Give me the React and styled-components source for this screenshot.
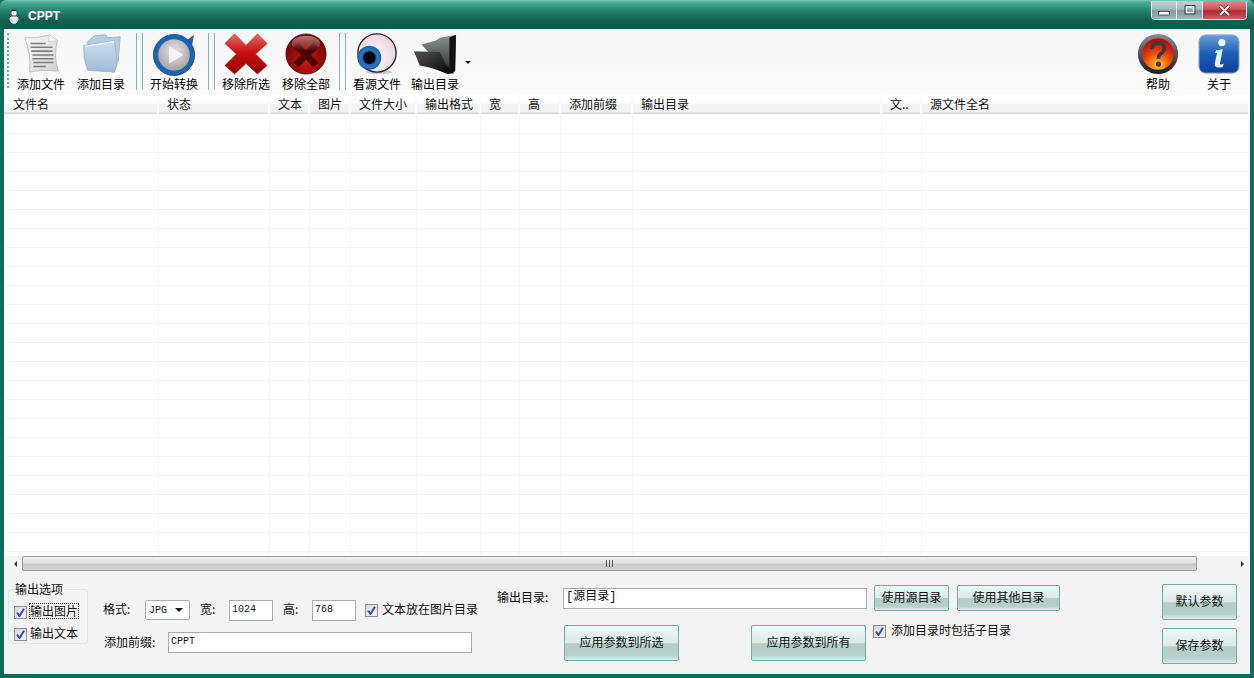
import React from 'react';
import styled, { createGlobalStyle } from 'styled-components';

const GlobalStyle = createGlobalStyle`
  html, body { margin: 0; padding: 0; background: #0f6b5b; }
  body { font-family: "Noto Sans CJK SC", "Liberation Sans", sans-serif; font-size: 12px; color: #111; }
  * { box-sizing: border-box; }
`;

const Window = styled.div`
  width: 1254px;
  height: 678px;
  display: flex;
  flex-direction: column;
  overflow: hidden;
  border-radius: 6px 6px 0 0;
  background: #0f6b5b;
`;

const TitleBar = styled.div`
  height: 29px;
  flex: none;
  display: flex;
  align-items: flex-start;
  padding-left: 8px;
  background: linear-gradient(#7fcab8 0, #4fb09a 2px, #2a8a76 9px, #14604f 20px, #0f5a4c 29px);
`;

const TitleIcon = styled.svg`
  width: 12px;
  height: 15px;
  margin-top: 9px;
`;

const TitleText = styled.span`
  margin: 9px 0 0 8px;
  font-family: "Liberation Sans", sans-serif;
  font-size: 12px;
  line-height: 15px;
  font-weight: bold;
  color: #fff;
`;

const Controls = styled.div`
  margin-left: auto;
  margin-right: 7px;
  display: flex;
  height: 19px;
  margin-top: 1px;
  border: 1px solid #dfe8e6;
  border-top: none;
  border-radius: 0 0 4px 4px;
  overflow: hidden;
`;

const ControlButton = styled.div`
  width: ${p => p.$width}px;
  display: flex;
  align-items: center;
  justify-content: center;
  border-right: ${p => (p.$close ? 'none' : '1px solid #e4ecea')};
  background: ${p =>
    p.$close
      ? 'linear-gradient(#e08a90 0, #c8555c 45%, #b02a30 55%, #cf5a60 100%)'
      : 'linear-gradient(#c4d2d6 0, #a6b8be 45%, #7e959d 55%, #a3b6bc 100%)'};
`;

const Body = styled.div`
  flex: 1;
  min-height: 0;
  display: flex;
  flex-direction: column;
  margin: 0 4px 4px 4px;
  background: #f3f3f3;
`;

const Toolbar = styled.div`
  height: 66px;
  flex: none;
  display: flex;
  padding-left: 3px;
  background: linear-gradient(#f6f6f6, #fcfcfc);
`;

const Grip = styled.div`
  width: 2px;
  height: 55px;
  margin: 4px 2px 0 0;
  border-left: 2px dotted #7fa8a8;
`;

const ToolButton = styled.div`
  width: ${p => p.$width || 60}px;
  display: flex;
  flex-direction: column;
  align-items: center;
  padding-top: 3px;
`;

const ToolIcon = styled.svg`
  width: 44px;
  height: 44px;
  display: block;
`;

const ToolLabel = styled.span`
  font-size: 12px;
  line-height: 15px;
  color: #000;
  white-space: nowrap;
`;

const Separator = styled.div`
  width: 7px;
  height: 57px;
  margin: 4px 1px 0 ${p => p.$left || 4}px;
  border-left: 1px solid #86b3b3;
  border-right: 1px solid #86b3b3;
`;

const DropArrow = styled.div`
  width: 0;
  height: 0;
  margin: 32px 0 0 2px;
  border-left: 3px solid transparent;
  border-right: 3px solid transparent;
  border-top: 3px solid #000;
`;

const RightTools = styled.div`
  margin-left: auto;
  display: flex;
`;

const GridHeader = styled.div`
  height: 19px;
  flex: none;
  display: flex;
  padding-left: 1px;
  background: linear-gradient(#ffffff 0, #ffffff 8px, #f2f3f5 9px, #f2f3f5 17px, #d5d5d5 18px);
`;

const HeaderCell = styled.div`
  width: ${p => p.$width}px;
  flex: ${p => (p.$grow ? 1 : 'none')};
  padding-left: 8px;
  font-size: 12px;
  line-height: 18px;
  color: #111;
  border-right: 2px solid #fbfbfb;
  overflow: hidden;
  white-space: nowrap;
`;

const GridBody = styled.div`
  flex: 1;
  min-height: 0;
  padding-top: 1px;
  overflow: hidden;
  background: #fff;
`;

const GridRow = styled.div`
  height: 19px;
  display: flex;
  padding-left: 1px;
  border-bottom: 1px solid #f3f3f3;
`;

const GridCell = styled.div`
  width: ${p => p.$width}px;
  flex: ${p => (p.$grow ? 1 : 'none')};
  border-right: 1px solid #f5f5f5;
`;

const ScrollBar = styled.div`
  height: 15px;
  flex: none;
  display: flex;
  align-items: center;
  background: #f3f3f3;
`;

const ScrollArrow = styled.div`
  width: 18px;
  display: flex;
  justify-content: ${p => (p.$right ? 'flex-start' : 'flex-end')};
  padding: ${p => (p.$right ? '0 0 0 44px' : '0 5px 0 0')};
`;

const Triangle = styled.div`
  width: 0;
  height: 0;
  border-top: 3px solid transparent;
  border-bottom: 3px solid transparent;
  ${p => (p.$right ? 'border-left: 3px solid #333;' : 'border-right: 3px solid #333;')}
`;

const ScrollThumb = styled.div`
  width: 1175px;
  height: 15px;
  display: flex;
  align-items: center;
  justify-content: center;
  border: 1px solid #9a9a9a;
  border-radius: 2px;
  background: linear-gradient(#f2f2f2 0, #e2e2e2 45%, #c6c6c6 55%, #d8d8d8 100%);
`;

const ThumbGrip = styled.div`
  width: 7px;
  height: 7px;
  background: repeating-linear-gradient(90deg, #555 0, #555 1px, transparent 1px, transparent 3px);
`;

const Panel = styled.div`
  height: 103px;
  flex: none;
  display: flex;
  align-items: flex-start;
  background: #f3f3f3;
  padding-right: 13px;
`;

const CheckRow = styled.label`
  display: flex;
  align-items: center;
  gap: 4px;
  height: 18px;
  font-size: 12px;
  color: #111;
  white-space: nowrap;
`;

const GroupBox = styled.fieldset`
  width: 80px;
  height: 63px;
  margin: 10px 0 0 4px;
  padding: 7px 0 0 5px;
  border: 1px solid #dce6ee;
  border-radius: 3px;
  display: flex;
  flex-direction: column;
  gap: 4px;

  ${CheckRow} {
    gap: 3px;
  }
`;

const GroupTitle = styled.legend`
  padding: 0;
  margin-left: 1px;
  font-size: 12px;
  line-height: 16px;
  color: #111;
`;

const CheckBox = styled.span`
  width: 13px;
  height: 13px;
  flex: none;
  display: flex;
  align-items: center;
  justify-content: center;
  border: 1px solid #8e8f8f;
  background: linear-gradient(135deg, #d8d8d8, #f4f4f4);
`;

const FocusLabel = styled.span`
  outline: ${p => (p.$focus ? '1px dotted #333' : 'none')};
  line-height: 14px;
  margin-bottom: 3px;
`;

const MidColumn = styled.div`
  width: 394px;
  margin-left: 15px;
  padding-top: 29px;
  display: flex;
  flex-direction: column;
  gap: 12px;
`;

const FieldRow = styled.div`
  display: flex;
  align-items: center;
  height: ${p => p.$height}px;
`;

const FieldLabel = styled.span`
  width: ${p => p.$width}px;
  margin-left: ${p => p.$left || 0}px;
  padding-bottom: 3px;
  flex: none;
  font-size: 12px;
  color: #111;
  white-space: nowrap;
`;

const TextBox = styled.div`
  width: ${p => p.$width}px;
  height: ${p => p.$height || 21}px;
  flex: none;
  margin-right: ${p => p.$right || 0}px;
  padding: 0 2px;
  border: 1px solid #a5acb2;
  background: #fff;
  font-family: "Liberation Mono", "Noto Sans CJK SC", monospace;
  font-size: ${p => (p.$cjk ? 12 : 10)}px;
  line-height: 17px;
  color: #111;
`;

const SelectBox = styled.div`
  width: 45px;
  height: 20px;
  flex: none;
  margin-right: 10px;
  padding: 0 0 0 3px;
  display: flex;
  align-items: center;
  justify-content: space-between;
  border: 1px solid #a5acb2;
  border-radius: 2px;
  background: #fff;
  font-family: "Liberation Mono", monospace;
  font-size: 10px;
  color: #111;
`;

const SelectArrow = styled.span`
  width: 0;
  height: 0;
  margin-right: 6px;
  border-left: 4px solid transparent;
  border-right: 4px solid transparent;
  border-top: 4px solid #111;
`;

const OutputColumn = styled.div`
  width: 563px;
  padding-top: 14px;
  display: flex;
  flex-direction: column;
  gap: 14px;
`;

const TealButton = styled.div`
  width: ${p => p.$width}px;
  height: ${p => p.$height}px;
  flex: none;
  margin: ${p => p.$margin || 0};
  padding-bottom: 4px;
  display: flex;
  align-items: center;
  justify-content: center;
  border: 1px solid #78a8a4;
  border-radius: 2px;
  font-size: 12px;
  color: #111;
  white-space: nowrap;
  background: linear-gradient(#f0f8f7 0, #dbeae8 50%, #b4cdc9 52%, #b8d0cc 86%, #d8f2f0 100%);
`;

const ApplyRow = styled.div`
  display: flex;
  align-items: flex-start;
  padding-left: 67px;
`;

const SubdirCheck = styled(CheckRow)`
  height: 13px;
  margin-left: 7px;
  gap: 5px;
`;

const SideButtons = styled.div`
  margin-left: auto;
  padding-top: 13px;
  display: flex;
  flex-direction: column;
  gap: 8px;
`;

const COLUMNS = [
  { title: '文件名', width: 154 },
  { title: '状态', width: 111 },
  { title: '文本', width: 40 },
  { title: '图片', width: 41 },
  { title: '文件大小', width: 66 },
  { title: '输出格式', width: 64 },
  { title: '宽', width: 39 },
  { title: '高', width: 41 },
  { title: '添加前缀', width: 72 },
  { title: '输出目录', width: 249 },
  { title: '文..', width: 40 },
  { title: '源文件全名', grow: true },
];

const ROW_COUNT = 24;

const CheckMark = () => (
  <svg width="9" height="9" viewBox="0 0 9 9">
    <path d="M1 4.5 L3.5 8 L8 0.8" fill="none" stroke="#3b4fa0" strokeWidth="2" />
  </svg>
);

const Check = ({ children, focus }) => (
  <CheckRow>
    <CheckBox><CheckMark /></CheckBox>
    <FocusLabel $focus={focus}>{children}</FocusLabel>
  </CheckRow>
);

const DocIcon = () => (
  <ToolIcon viewBox="0 0 46 44">
    <defs>
      <linearGradient id="docFill" x1="0" y1="0" x2="1" y2="1">
        <stop offset="0" stopColor="#fafafa" />
        <stop offset="1" stopColor="#d2d2d2" />
      </linearGradient>
    </defs>
    <path d="M6 5 Q20 6 32 2 L40 8 Q36 24 41 40 Q24 38 11 41 Q13 22 6 5 Z" fill="url(#docFill)" stroke="#bdbdbd" />
    <path d="M32 2 L31 9 L40 8 Z" fill="#fff" stroke="#ccc" />
    <path d="M12 11 H28 M12 15 H35 M13 19 H35 M14 23 H36 M14 27 H36 M15 31 H36 M15 35 H28" stroke="#7d7d7d" strokeWidth="1.6" />
  </ToolIcon>
);

const FolderIcon = () => (
  <ToolIcon viewBox="0 0 46 44">
    <defs>
      <linearGradient id="folderFill" x1="0" y1="0" x2="0" y2="1">
        <stop offset="0" stopColor="#cfe0ef" />
        <stop offset="1" stopColor="#9dbad6" />
      </linearGradient>
    </defs>
    <path d="M8 10 L16 3 L28 2 L30 5 L43 4 L41 30 L35 33 Z" fill="#b9cde0" stroke="#a5b9cc" />
    <path d="M5 13 L37 8 L40 32 L37 41 L9 39 Q4 26 5 13 Z" fill="url(#folderFill)" stroke="#9ab0c6" />
    <path d="M6 14 L37 9" stroke="#eef5fb" strokeWidth="1.5" />
  </ToolIcon>
);

const PlayIcon = () => (
  <ToolIcon viewBox="0 0 46 44">
    <defs>
      <radialGradient id="playDisc" cx="0.5" cy="0.4" r="0.6">
        <stop offset="0" stopColor="#e4e4e4" />
        <stop offset="1" stopColor="#9c9c9c" />
      </radialGradient>
    </defs>
    <path d="M36 8 L44 2 L42 12 Z" fill="#2a62a8" />
    <circle cx="23" cy="23" r="19" fill="url(#playDisc)" stroke="#1f62ae" strokeWidth="5" />
    <circle cx="23" cy="23" r="21.5" fill="none" stroke="#123f7c" strokeWidth="0.8" />
    <path d="M18 14 L33 23 L18 32 Z" fill="#f4f4f4" />
  </ToolIcon>
);

const CrossIcon = () => (
  <ToolIcon viewBox="0 0 46 44">
    <defs>
      <linearGradient id="crossFill" x1="0" y1="0" x2="0" y2="1">
        <stop offset="0" stopColor="#ea6a6a" />
        <stop offset="0.45" stopColor="#c81010" />
        <stop offset="1" stopColor="#8e0404" />
      </linearGradient>
    </defs>
    <path d="M11 1 L23 13 L35 1 L45 11 L33 22 L45 34 L35 43 L23 32 L11 43 L1 34 L13 22 L1 11 Z" fill="url(#crossFill)" stroke="#a22" strokeWidth="0.7" strokeLinejoin="round" />
  </ToolIcon>
);

const CircleCrossIcon = () => (
  <ToolIcon viewBox="0 0 46 44">
    <defs>
      <radialGradient id="redBall" cx="0.5" cy="0.7" r="0.7">
        <stop offset="0" stopColor="#c81818" />
        <stop offset="1" stopColor="#6a0404" />
      </radialGradient>
      <linearGradient id="redShine" x1="0" y1="0" x2="0" y2="1">
        <stop offset="0" stopColor="#ffffff" stopOpacity="0.45" />
        <stop offset="1" stopColor="#ffffff" stopOpacity="0" />
      </linearGradient>
    </defs>
    <circle cx="23" cy="22" r="21" fill="url(#redBall)" stroke="#4a0202" strokeWidth="0.8" />
    <path d="M15 10 L23 18 L31 10 L36 15 L28 23 L36 31 L31 36 L23 28 L15 36 L10 31 L18 23 L10 15 Z" fill="#4e0303" />
    <ellipse cx="23" cy="11" rx="15" ry="8" fill="url(#redShine)" />
  </ToolIcon>
);

const EyeIcon = () => (
  <ToolIcon viewBox="0 0 46 44">
    <defs>
      <radialGradient id="eyeBall" cx="0.4" cy="0.6" r="0.7">
        <stop offset="0" stopColor="#fff" />
        <stop offset="1" stopColor="#e7cfdc" />
      </radialGradient>
      <radialGradient id="iris" cx="0.5" cy="0.5" r="0.5">
        <stop offset="0.4" stopColor="#0c3f80" />
        <stop offset="0.7" stopColor="#2a7ac0" />
        <stop offset="1" stopColor="#1a5ea8" />
      </radialGradient>
    </defs>
    <ellipse cx="25" cy="41" rx="14" ry="2" fill="#ccc" />
    <circle cx="23" cy="21" r="20" fill="url(#eyeBall)" stroke="#222" strokeWidth="1.4" />
    <circle cx="15" cy="26" r="12.5" fill="url(#iris)" />
    <circle cx="15" cy="26" r="6.5" fill="#050510" />
  </ToolIcon>
);

const DarkFolderIcon = () => (
  <ToolIcon viewBox="0 0 46 44">
    <defs>
      <linearGradient id="darkBack" x1="0" y1="0" x2="0" y2="1">
        <stop offset="0" stopColor="#8a9494" />
        <stop offset="1" stopColor="#2a2a2a" />
      </linearGradient>
      <linearGradient id="darkFront" x1="0" y1="0" x2="1" y2="1">
        <stop offset="0" stopColor="#555" />
        <stop offset="1" stopColor="#000" />
      </linearGradient>
    </defs>
    <path d="M9 12 L24 8 L28 5 L45 2 L44 40 L36 42 Z" fill="url(#darkBack)" />
    <path d="M1 19 L28 20 L34 32 L43 42 L36 43 Q20 36 7 34 Z" fill="url(#darkFront)" />
    <path d="M38 5 L45 2 L44 40 L38 42 Z" fill="#111" />
  </ToolIcon>
);

const HelpIcon = () => (
  <ToolIcon viewBox="0 0 46 44">
    <defs>
      <radialGradient id="helpFill" cx="0.5" cy="0.85" r="0.75">
        <stop offset="0" stopColor="#ffd020" />
        <stop offset="0.5" stopColor="#f05010" />
        <stop offset="1" stopColor="#c00c10" />
      </radialGradient>
      <linearGradient id="helpRim" x1="0" y1="0" x2="0" y2="1">
        <stop offset="0" stopColor="#8c8c8c" />
        <stop offset="1" stopColor="#1c1c1c" />
      </linearGradient>
    </defs>
    <circle cx="23" cy="22" r="21" fill="url(#helpRim)" />
    <circle cx="23" cy="22" r="16.5" fill="url(#helpFill)" />
    <path d="M16.5 17 Q17 10.5 23.5 10.5 Q30 11 29.5 16.5 Q29 20 25.5 22 Q23.5 23.5 23.5 27" fill="none" stroke="#3a3a3a" strokeWidth="4" />
    <circle cx="23.5" cy="32.5" r="2.7" fill="#3a3a3a" />
  </ToolIcon>
);

const InfoIcon = () => (
  <ToolIcon viewBox="0 0 46 44">
    <defs>
      <linearGradient id="infoFill" x1="0" y1="0" x2="0" y2="1">
        <stop offset="0" stopColor="#6a9ed8" />
        <stop offset="0.5" stopColor="#1c5cb4" />
        <stop offset="1" stopColor="#0e3e9c" />
      </linearGradient>
    </defs>
    <rect x="2" y="2" width="42" height="40" rx="7" fill="url(#infoFill)" stroke="#a8b4c0" />
    <circle cx="26" cy="10" r="3.8" fill="#f2f8ff" />
    <path d="M20 18 L27 17 L24 32 Q24 34 28 32 L27 35.5 Q18 38 18.5 32 L21 21 L18.5 21 Z" fill="#e4f0fb" />
  </ToolIcon>
);

const App = () => (
  <>
    <GlobalStyle />
    <Window>
      <TitleBar>
        <TitleIcon viewBox="0 0 12 15">
          <circle cx="6" cy="4" r="2.6" fill="#f4f4f4" />
          <path d="M3.5 2 H8.5 L7.5 0.5 H4.5 Z" fill="#222" />
          <ellipse cx="6" cy="10.5" rx="4.5" ry="4.2" fill="#d8ecf4" />
          <path d="M3 7 H9" stroke="#d03030" strokeWidth="1.2" />
          <path d="M1 6 L3 8 M11 6 L9 8" stroke="#222" strokeWidth="0.8" />
        </TitleIcon>
        <TitleText>CPPT</TitleText>
        <Controls>
          <ControlButton $width={25}>
            <svg width="12" height="12" viewBox="0 0 12 12"><rect x="0.5" y="7.5" width="11" height="3.5" fill="#f6f8f8" stroke="#35464c" strokeWidth="0.8" /></svg>
          </ControlButton>
          <ControlButton $width={26}>
            <svg width="12" height="12" viewBox="0 0 12 12"><rect x="1" y="1.5" width="10" height="8.5" fill="none" stroke="#35464c" strokeWidth="1" /><rect x="2.5" y="3" width="7" height="5.5" fill="none" stroke="#f0f4f4" strokeWidth="1.4" /></svg>
          </ControlButton>
          <ControlButton $width={43} $close>
            <svg width="13" height="11" viewBox="0 0 13 11"><path d="M2 1 L11 10 M11 1 L2 10" stroke="#6a2a30" strokeWidth="3.4" /><path d="M2 1 L11 10 M11 1 L2 10" stroke="#f6eeee" strokeWidth="2" /></svg>
          </ControlButton>
        </Controls>
      </TitleBar>
      <Body>
        <Toolbar>
          <Grip />
          <ToolButton><DocIcon /><ToolLabel>添加文件</ToolLabel></ToolButton>
          <ToolButton><FolderIcon /><ToolLabel>添加目录</ToolLabel></ToolButton>
          <Separator $left={5} />
          <ToolButton><PlayIcon /><ToolLabel>开始转换</ToolLabel></ToolButton>
          <Separator />
          <ToolButton><CrossIcon /><ToolLabel>移除所选</ToolLabel></ToolButton>
          <ToolButton><CircleCrossIcon /><ToolLabel>移除全部</ToolLabel></ToolButton>
          <Separator $left={3} />
          <ToolButton><EyeIcon /><ToolLabel>看源文件</ToolLabel></ToolButton>
          <ToolButton $width={56}><DarkFolderIcon /><ToolLabel>输出目录</ToolLabel></ToolButton>
          <DropArrow />
          <RightTools>
            <ToolButton><HelpIcon /><ToolLabel>帮助</ToolLabel></ToolButton>
            <ToolButton $width={62}><InfoIcon /><ToolLabel>关于</ToolLabel></ToolButton>
          </RightTools>
        </Toolbar>
        <GridHeader>
          {COLUMNS.map(col => (
            <HeaderCell key={col.title} $width={col.width} $grow={col.grow}>{col.title}</HeaderCell>
          ))}
        </GridHeader>
        <GridBody>
          {Array.from({ length: ROW_COUNT }, (_, row) => (
            <GridRow key={row}>
              {COLUMNS.map(col => (
                <GridCell key={col.title} $width={col.width} $grow={col.grow} />
              ))}
            </GridRow>
          ))}
        </GridBody>
        <ScrollBar>
          <ScrollArrow><Triangle /></ScrollArrow>
          <ScrollThumb><ThumbGrip /></ScrollThumb>
          <ScrollArrow $right><Triangle $right /></ScrollArrow>
        </ScrollBar>
        <Panel>
          <GroupBox>
            <GroupTitle>输出选项</GroupTitle>
            <Check focus>输出图片</Check>
            <Check>输出文本</Check>
          </GroupBox>
          <MidColumn>
            <FieldRow $height={20}>
              <FieldLabel $width={42}>格式:</FieldLabel>
              <SelectBox>JPG<SelectArrow /></SelectBox>
              <FieldLabel $width={29}>宽:</FieldLabel>
              <TextBox $width={44} $right={10}>1024</TextBox>
              <FieldLabel $width={29}>高:</FieldLabel>
              <TextBox $width={44} $right={9}>768</TextBox>
              <Check>文本放在图片目录</Check>
            </FieldRow>
            <FieldRow $height={21}>
              <FieldLabel $width={64} $left={1}>添加前缀:</FieldLabel>
              <TextBox $width={304}>CPPT</TextBox>
            </FieldRow>
          </MidColumn>
          <OutputColumn>
            <FieldRow $height={26}>
              <FieldLabel $width={66}>输出目录:</FieldLabel>
              <TextBox $width={304} $right={7} $cjk>[源目录]</TextBox>
              <TealButton $width={75} $height={26} $margin="0 8px 0 0">使用源目录</TealButton>
              <TealButton $width={103} $height={26}>使用其他目录</TealButton>
            </FieldRow>
            <ApplyRow>
              <TealButton $width={115} $height={36} $margin="0 72px 0 0">应用参数到所选</TealButton>
              <TealButton $width={115} $height={36}>应用参数到所有</TealButton>
              <SubdirCheck><CheckBox><CheckMark /></CheckBox><FocusLabel>添加目录时包括子目录</FocusLabel></SubdirCheck>
            </ApplyRow>
          </OutputColumn>
          <SideButtons>
            <TealButton $width={75} $height={36}>默认参数</TealButton>
            <TealButton $width={75} $height={36}>保存参数</TealButton>
          </SideButtons>
        </Panel>
      </Body>
    </Window>
  </>
);

export default App;
